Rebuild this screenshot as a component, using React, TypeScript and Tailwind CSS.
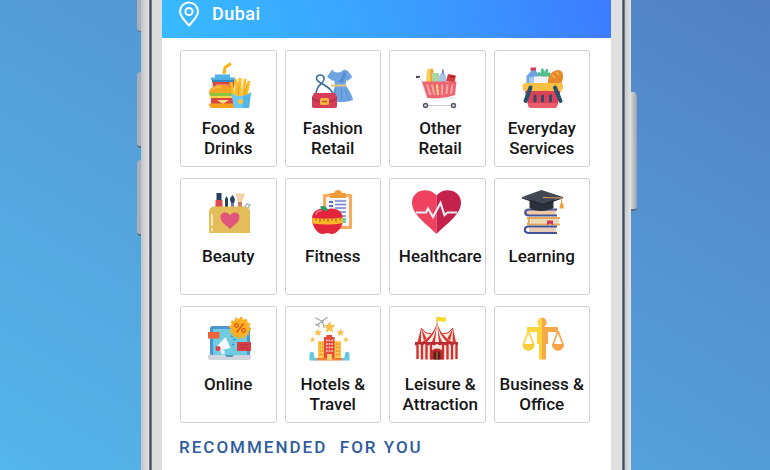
import React from 'react';

interface Category {
  lines: string[];
  icon: React.ReactNode;
}

interface IconProps {
  children: React.ReactNode;
}

const Icon: React.FC<IconProps> = ({ children }) => (
  <svg viewBox="0 0 50 50" width="50" height="50" aria-hidden="true">
    {children}
  </svg>
);

const STAR = 'M0 -6 1.8 -2 6 -1.7 2.8 1.2 3.7 5.4 0 3.2 -3.7 5.4 -2.8 1.2 -6 -1.7 -1.8 -2Z';

const FoodIcon = () => (
  <Icon>
    <path d="M21 14 22 7.500 28 3.500" fill="none" stroke="#f5b31f" strokeWidth="3" strokeLinejoin="round" />
    <path d="M8 20V17.500h4V14.500h15v3h5V20Z" fill="#4fb1e6" />
    <path d="M9 20h23l-1.500 10h-20Z" fill="#d9453f" />
    <path d="M9 20h23v2H9Z" fill="#3a86c4" />
    <path d="M13 24h15v2H13Z" fill="#f07a62" />
    <path d="M6 33c0-5 4-8 12-8s13 3 13 8Z" fill="#f5a524" />
    <path d="M9 30c2-3 5-3.500 9-3.500" fill="none" stroke="#fbc556" strokeWidth="1.500" />
    <path d="M6 33h26l-2 3H7Z" fill="#8cc63f" />
    <path d="M7 36h25v2H7Z" fill="#fbd34b" />
    <path d="M8 38h24v6H8Z" fill="#d9453f" />
    <path d="M14 40h12l-6 4Z" fill="#fbe08c" />
    <path d="M6 43.500h26V48H9c-2 0-3-2-3-4.500Z" fill="#f9a01b" />
    <path d="M31 36 28 22M34 36 32.500 19M37 36V18M40 36 42 19M43 36 46 21" stroke="#fbbf24" strokeWidth="3" />
    <path d="M35.500 35 35 22M41.500 35 44 24" stroke="#f08c1a" strokeWidth="1" />
    <path d="M28 33c6 4 13 4 20-1l-2 16H31Z" fill="#6cc8ee" />
    <path d="M40 36c3 0 6-2 8-4l-2 16h-6Z" fill="#55b6e4" />
    <circle cx="37.500" cy="41.500" r="2.500" fill="#f5c542" />
  </Icon>
);

const FashionIcon = () => (
  <Icon>
    <path d="M24 9.500c2 4 9 4 12 0l4 1.500 4.500 6-5 4-1-1-1 5c4 5 7 11 7.500 15-5 2.500-17 3-22 0 1-5 3-10 4-15l-1-5-1 1-6-4 4-6Z" fill="#6ea5e0" />
    <path d="M36 10c-1 6-3 9-6 12l5 .5 3-8Z" fill="#568ccc" />
    <path d="M23 24.500h14.500v2H23Z" fill="#e6c37a" />
    <path d="M28 28 26 41M33 28l1 13M37 29l4 11" stroke="#5790d0" strokeWidth="1" />
    <path d="M8 34C8 24 17 24 16 18c-.5-4-7-4-7.500 0-.5 6 15.500 7 16.500 17" fill="none" stroke="#3c6e9c" strokeWidth="1.600" />
    <path d="M6 33h21l2 4V46c0 1-.6 2-1.600 2H5.600C4.600 48 4 47 4 46V37Z" fill="#d63e57" />
    <path d="M4 37c7 5 18 5 25 0v3c-7 4-18 4-25 0Z" fill="#bd3450" />
    <rect x="12" y="38" width="9" height="7" rx="1.500" fill="#f7b343" />
    <path d="M14 41.500h5" stroke="#b7652a" strokeWidth="1.500" />
  </Icon>
);

const CartIcon = () => (
  <Icon>
    <path d="M14 22 15 9.500l2-1.500 2 2v12Z" fill="#f8cf58" />
    <path d="M18 22V10l2-2 1.500 2v12Z" fill="#f1a93a" />
    <path d="M20 13h7v9h-7Z" fill="#a9d6a5" />
    <path d="M27 16l4-5 3 5v6h-7Z" fill="#a8c6ea" />
    <path d="M31 9.500v5" stroke="#8494c8" strokeWidth="2" />
    <path d="m36 14 8 1.500-1.500 7L34 21Z" fill="#d83b3b" />
    <path d="m38 16 4 1" stroke="#8d2032" strokeWidth="1.500" />
    <path d="M4 17h4" stroke="#45475a" strokeWidth="2.200" />
    <path d="M7 17.500 10 22l5 16h28" fill="none" stroke="#dcdee6" strokeWidth="1.200" />
    <path d="M10 21.500h34.500L43 35c-9 3-18 3.500-27.500 3Z" fill="#ee6572" />
    <path d="M15 24.500 18.500 35M20 24.500 22.500 35M30 24.500V35M35.500 24.500 34.500 34M40.500 24.500 39 33.500" stroke="#f8a6a4" strokeWidth="2" />
    <path d="M25 24.500 26 35" stroke="#f6d58c" strokeWidth="2" />
    <path d="M14 45.500h28" stroke="#c8cbd6" strokeWidth="1.200" />
    <circle cx="13.500" cy="45.500" r="2" fill="#d9dbe3" stroke="#55566b" strokeWidth="1.400" />
    <circle cx="41.500" cy="45.500" r="2" fill="#d9dbe3" stroke="#55566b" strokeWidth="1.400" />
  </Icon>
);

const BasketIcon = () => (
  <Icon>
    <path d="M14 8h5v3l3 5v9H9.500v-9L14 11Z" fill="#6fa3de" />
    <path d="M13.500 7.500h5.500v3h-5.500Z" fill="#d63c55" />
    <path d="M12 17h5v7h-5Z" fill="#a7c9ee" />
    <path d="M25 17c-5-1-6-5-3-5l2 1c-1-5 2-7 3.500-1 2-5 5-4 3 1 3-2 4 1 1.500 4Z" fill="#4fbf8b" />
    <path d="M17 16.500h14V25H17Z" fill="#eef2f6" />
    <path d="M31 24c-1-8 4-14 11-14 5 1 5 8 2 14Z" fill="#e8892b" />
    <path d="m35 15 3 3m1-6 3 3" stroke="#f3b25a" strokeWidth="1.300" />
    <rect x="5.500" y="23" width="40.500" height="8" rx="3.500" fill="#fbbf45" />
    <path d="M8 31h35.500l-3 14c-.5 2-1.500 3-3.500 3H14.500c-2 0-3-1-3.500-3Z" fill="#d94359" />
    <path d="M10.500 43h30.500l-1 3c-.5 1.300-1.500 2-3 2H14.500c-1.500 0-2.500-.7-3-2Z" fill="#ea5d6b" />
    <path d="M13.500 27.500 8.500 41M38 27.500 43.500 41" stroke="#28516b" strokeWidth="4" strokeLinecap="round" />
    <path d="M18 36v5M25.500 36v5M33.500 36v5" stroke="#3a4668" strokeWidth="3" strokeLinecap="round" />
  </Icon>
);

const BeautyIcon = () => (
  <Icon>
    <path d="M13.500 5h5v7h-5Z" fill="#25405a" />
    <path d="M12.500 12h7v7h-7Z" fill="#dd4a50" />
    <path d="M22 11 23.500 8 25 11v9h-3Z" fill="#24445c" />
    <path d="M27 12c0-3 1-3 2.500-5C31 9 32 10 32 12L31 15h-3Z" fill="#2a4664" />
    <path d="M28 15h3v5h-3Z" fill="#6d79b8" />
    <path d="M32.500 5.500h9.500L39 14h-4Z" fill="#f4d2a8" />
    <path d="M35 14h4v6h-4Z" fill="#c77d63" />
    <path d="M41 20 44 16l3 1-3 4" fill="none" stroke="#86a7a8" strokeWidth="1.200" />
    <path d="M6 45V24c0-4 3-5.500 6-5.500h29c3 0 6 1.500 6 5.500v21Z" fill="#e2bd59" />
    <path d="M9 27v10M9 41v1.500" stroke="#f8e7b5" strokeWidth="2" strokeLinecap="round" />
    <path d="M27 41c-4-4-9.500-7-9.500-12 0-5 7-6.500 9.500-1.500 2.500-5 9.500-3.500 9.500 1.500 0 5-5.500 8-9.500 12Z" fill="#e0557b" />
  </Icon>
);

const FitnessIcon = () => (
  <Icon>
    <rect x="15" y="6" width="29" height="35" rx="1.500" fill="#f7ab5c" />
    <path d="M18 9h23v29H18Z" fill="#f5f5fa" />
    <path d="M22 5h4c1-4 7-4 8 0h4v5H22Z" fill="#f39c3a" />
    <path d="M21 14h4M21 18h4M21 22h4" stroke="#5a6cc4" strokeWidth="1.800" />
    <path d="M27 13h11M27 16.500h11M27 20h11M30 24h8M34 28h4" stroke="#7482cc" strokeWidth="1.400" />
    <path d="M34 30h4v5h-4Z" fill="#6fc7b7" />
    <path d="M19 21.500c6-3 16 0 16 9.500 0 8-6 15-11 15-2 0-3-1-4.500-1s-2.500 1-4.500 1C9 46 4 38 4 31c0-9.500 9-12.500 15-9.500Z" fill="#e3263c" />
    <path d="M8 26c1-2.500 3-3.500 5-3.500" fill="none" stroke="#f47b82" strokeWidth="1.500" strokeLinecap="round" />
    <path d="M12 18.500c4-1.500 7 0 8 4-4 1-7-.5-8-4Z" fill="#2d9e6b" />
    <path d="M4 30c10 1 20 1 31-.5v5.500c-10 2-20 2-30.500.5Z" fill="#fbb829" />
    <path d="M8 30.500v2M12 31v3M16 31v2M20 31v3M24 31v2M28 30.500v3M32 30v2" stroke="#9c5515" strokeWidth="1" />
  </Icon>
);

const HeartIcon = () => (
  <Icon>
    <path d="M24.500 46C15 36 0 27 0 14.500 0 2 17-2 24.500 7.500Z" fill="#ef4260" />
    <path d="M24.500 46C34 36 49 27 49 14.500 49 2 32-2 24.500 7.500Z" fill="#c4214d" />
    <path d="M4 24.500h10l2-4 5 8.500 7.500-14 4 12 3-2.500H45" fill="none" stroke="#e3edf5" strokeWidth="2.200" />
  </Icon>
);

const LearningIcon = () => (
  <Icon>
    <path d="M8 24.500h31" stroke="#efc9a2" strokeWidth="5" />
    <path d="M40 21.500H12c-5 0-5 6 0 6h28" fill="none" stroke="#45539a" strokeWidth="2.200" />
    <path d="M14 33h28" stroke="#ead8bb" strokeWidth="5" />
    <path d="M43 30H10.500M43 36.500H10.500M10 30c3 1 3 5 0 6.500" fill="none" stroke="#e2aa58" strokeWidth="2.200" />
    <path d="M30 32.500h6V37l-3-1.500-3 1.500Z" fill="#d6355b" />
    <path d="M12 42h27" stroke="#e8ccb6" strokeWidth="5" />
    <path d="M40 38.500H12c-5.500 0-5.500 6.500 0 6.500h28" fill="none" stroke="#45539a" strokeWidth="2.200" />
    <path d="M12.500 11h24v9c-7 4-18 4-24 0Z" fill="#2b303b" />
    <path d="M5 9 24.500 2 46 9 26 16Z" fill="#414754" />
    <path d="M5 9 26 16 46 9v1.300L26 17.500 5 10.500Z" fill="#242832" />
    <path d="M26 9.500 44.500 10v6" fill="none" stroke="#dca052" strokeWidth="1" />
    <path d="M43.500 15h2.500l1 5.500h-4.500Z" fill="#eea13c" />
  </Icon>
);

const OnlineIcon = () => (
  <Icon>
    <rect x="7" y="10" width="40" height="30" rx="2.500" fill="#4a97d2" />
    <path d="M10 13h34v26H10Z" fill="#6ecbe0" />
    <path d="M5 39h43v2.500c0 1.500-1 2.500-2.500 2.500h-38C6 44 5 43 5 41.500Z" fill="#cfd6de" />
    <path d="M22 39h9l-1.500 2h-6Z" fill="#4c9bc0" />
    <path d="M14 30 22.500 21 27.500 32 16.500 34.500Z" fill="#f5f8fb" />
    <path d="m17 34 4-.8 1 5h-3.500Z" fill="#e7eef5" />
    <circle cx="15" cy="32.500" r="2.500" fill="#dc3f43" />
    <path d="M28 20l2 1M30 24l3-1M29 28l2 1" stroke="#2e8bb0" strokeWidth="1.200" />
    <path d="M5 16h11.500v6.500H5Z" fill="#f0643a" />
    <path d="M34 26h14v9H34Z" fill="#d93f45" />
    <path d="M36.500 29h9M36.500 32h9" stroke="#a82b3b" strokeWidth="1" />
    <circle cx="37" cy="12" r="9.500" fill="#fbb023" />
    <circle cx="37" cy="12" r="10" fill="none" stroke="#fbb023" strokeWidth="2" strokeDasharray="2.600 2.600" />
    <path d="m33.500 16.500 7-9" stroke="#dd5a1d" strokeWidth="1.500" />
    <circle cx="33.500" cy="9.500" r="1.800" fill="none" stroke="#dd5a1d" strokeWidth="1.300" />
    <circle cx="40.500" cy="14.500" r="1.800" fill="none" stroke="#dd5a1d" strokeWidth="1.300" />
  </Icon>
);

const HotelIcon = () => (
  <Icon>
    <path d="M8.500 9.500 19 1.500M14 5 7.500 2M14.500 5 16 11.500M10 8.500 7 8M10.500 8.500 11 11" fill="none" stroke="#a5a5aa" strokeWidth="1.200" strokeLinecap="round" />
    <path d={STAR} transform="translate(21.500 11)" fill="#fbbf4d" />
    <path d={STAR} transform="translate(10 16.500) scale(.65)" fill="#fbbf4d" />
    <path d={STAR} transform="translate(32.500 16.500) scale(.65)" fill="#fbbf4d" />
    <path d={STAR} transform="translate(4.500 23.500) scale(.5)" fill="#fbc45c" />
    <path d={STAR} transform="translate(38 23.500) scale(.5)" fill="#fbc45c" />
    <path d="M10 25h7v19h-7ZM26 25h7v19h-7Z" fill="#fbc54e" />
    <path d="M16 21h2.500v-2H24v2h2.500v23H16Z" fill="#e8483b" />
    <path d="M18 24.500h7M18 28h7M18 31.500h7M18 35h7" stroke="#fff0dc" strokeWidth="1.600" strokeDasharray="1.500 1.200" />
    <path d="M11.500 28h4M11.500 31.500h4M11.500 35h4M11.500 38.500h4M28 28h4M28 31.500h4M28 35h4M28 38.500h4" stroke="#f38a2a" strokeWidth="1.400" strokeDasharray="1.500 1" />
    <path d="M7 42h28v2.500H7Z" fill="#f47b32" />
    <path d="M19 38h5v6h-5Z" fill="#f9cf6b" />
    <path d="M1.500 44.500v-7c1-2.500 4-2 4.500 0l.5 4 2.500 1v2ZM41.500 44.500v-7c-1-2.500-4-2-4.500 0l-.5 4-2.500 1v2Z" fill="#66c9df" />
  </Icon>
);

const TentIcon = () => (
  <Icon>
    <path d="M25 1v8" stroke="#c9a22c" strokeWidth="1" />
    <path d="M25 1.500c3-1.500 5 1.500 9-.5v4c-4 2-6-1-9 .5Z" fill="#f9d81f" />
    <path d="M9 12 3.500 27H19l2-9ZM41 12l5 15H31l-2-9Z" fill="#f8e9e2" />
    <path d="M9 12 5.500 27H9ZM9 12l3.500 15H17ZM41 12l3 15h-3.500ZM41 12l-3.500 15H33Z" fill="#d9342f" />
    <path d="M9 12 14 17 21 18M41 12l-5 5-7 1" fill="none" stroke="#d9342f" strokeWidth="1" />
    <path d="M25 6.500C23 15 17 22 8 26.500h34C33 22 27 15 25 6.500Z" fill="#f9efe9" />
    <path d="M25 6.500C23 15 17 22 9 26.500h5.500C20 21 24 15 25 6.500ZM25 6.500C24 15 22 22 19.500 26.500h3.500ZM25 6.500C26 15 28 22 30.500 26.500H27ZM25 6.500C27 15 33 22 41 26.500h-5.500C30 21 26 15 25 6.500Z" fill="#d9342f" />
    <path d="M4 28h41.500v15.500H4Z" fill="#f8e9e2" />
    <path d="M5.500 28v15M10 28v15.500M14.500 28v15.500M19 28v15.500M31 28v15.500M35.500 28v15.500M40 28v15.500M44.500 28v15" stroke="#d32f2f" strokeWidth="2.300" />
    <path d="M3 26h43v3l-3-1-3 1.500L37 28l-3 1.500L31 28l-3 1.500-3-1.500-3 1.500-3-1.500-3 1.500-3-1.500-3 1.500L7 28l-4 1.500Z" fill="#b92c30" />
    <path d="M19 43.500V37c0-6 12-6 12 0v6.500Z" fill="#c02a2c" />
    <path d="M21.500 43.500V38c0-4 7-4 7 0v5.500Z" fill="#55211f" />
    <path d="M25 35.500v8" stroke="#c47a3c" strokeWidth="1" />
  </Icon>
);

const ScalesIcon = () => (
  <Icon>
    <path d="M25 1.500a5 5 0 0 0-2.500 9V11H10v5h10v12h2v15.500h3.500Z" fill="#fcd43b" />
    <path d="M25 1.500a5 5 0 0 1 2.500 9V11H41v5H31v12h-2v15.500h-4Z" fill="#f7a94a" />
    <path d="M11.500 15 6.500 28.500M11.500 15l5 13.500" stroke="#fcd43b" strokeWidth="1.700" />
    <path d="M41 15l-5 13.500M41 15l5 13.500" stroke="#f7a94a" strokeWidth="1.700" />
    <path d="M5.500 28h12c0 9-12 9-12 0Z" fill="#f9ce35" />
    <path d="M35 28h12c0 9-12 9-12 0Z" fill="#f6a445" />
  </Icon>
);

const categories: Category[] = [
  { lines: ['Food &', 'Drinks'], icon: <FoodIcon /> },
  { lines: ['Fashion', 'Retail'], icon: <FashionIcon /> },
  { lines: ['Other', 'Retail'], icon: <CartIcon /> },
  { lines: ['Everyday', 'Services'], icon: <BasketIcon /> },
  { lines: ['Beauty'], icon: <BeautyIcon /> },
  { lines: ['Fitness'], icon: <FitnessIcon /> },
  { lines: ['Healthcare'], icon: <HeartIcon /> },
  { lines: ['Learning'], icon: <LearningIcon /> },
  { lines: ['Online'], icon: <OnlineIcon /> },
  { lines: ['Hotels &', 'Travel'], icon: <HotelIcon /> },
  { lines: ['Leisure &', 'Attraction'], icon: <TentIcon /> },
  { lines: ['Business &', 'Office'], icon: <ScalesIcon /> },
];

const CategoryCard: React.FC<{ category: Category }> = ({ category }) => (
  <button
    type="button"
    className="group flex min-w-0 flex-col items-center rounded-[3px] border border-[#d2d2d4] bg-white pt-[9px] pb-2"
  >
    {category.icon}
    <span className="mt-2 flex min-h-10 flex-col whitespace-nowrap text-center text-[17px] font-medium leading-5 text-[#161616] group-nth-[4n+3]:pl-1.5">
      {category.lines.map((line) => (
        <span key={line}>{line}</span>
      ))}
    </span>
  </button>
);

const App: React.FC = () => {
  return (
    <div className="flex min-h-screen justify-center overflow-hidden bg-linear-to-tr from-[#54b6ea] via-[#549cd8] to-[#5280c3] pl-1 font-['Roboto',sans-serif]">
      {/* Volume keys */}
      <div className="flex w-1 flex-col">
        <div className="h-8 rounded-bl-sm border-b border-[#5c6878] bg-[#a9b0bb]" />
        <div className="mt-10 h-[76px] rounded-l-sm border-b-2 border-[#5c6878] bg-[#a9b0bb]" />
        <div className="mt-3 h-[76px] rounded-l-sm border-b-2 border-[#5c6878] bg-[#a9b0bb]" />
      </div>

      {/* Phone body */}
      <div className="flex w-full max-w-[490px]">
        <div className="w-2 bg-linear-to-r from-[#c2c6ca] to-[#e2e2e1]" />
        <div className="w-[3px] bg-linear-to-r from-[#8d949f] via-[#404b5e] to-[#8d949f]" />
        <div className="w-2.5 bg-[#dadcdc]" />

        <main className="min-w-0 flex-1 bg-white">
          <header className="flex h-[38px] items-start gap-3 bg-linear-75 from-[#38baff] via-[#3ba1ff] to-[#3d7bff] pl-4 text-white">
            <svg viewBox="0 0 22 26" width="22" height="26" className="mt-px" fill="none" stroke="currentColor" strokeWidth="2" aria-hidden="true">
              <path d="M11 24.500C7.500 20.500 2 15.500 2 10.500a9 9 0 0 1 18 0c0 5-5.500 10-9 14Z" strokeLinejoin="round" />
              <circle cx="11" cy="10.500" r="3.600" />
            </svg>
            <span className="mt-0.5 text-lg font-medium leading-6 tracking-wide">Dubai</span>
          </header>

          {/* Category grid */}
          <section className="grid grid-cols-4 gap-x-2 gap-y-[11px] pt-3 pr-[21px] pl-[18px]">
            {categories.map((category) => (
              <CategoryCard key={category.lines.join(' ')} category={category} />
            ))}
          </section>

          <h2 className="mt-3 whitespace-pre pl-[17px] text-[17px] font-medium leading-6 tracking-[2px] text-[#2e5c9e]">
            {'RECOMMENDED  FOR YOU'}
          </h2>
        </main>

        <div className="w-[11px] bg-[#dfe1e0]" />
        <div className="w-[3px] bg-linear-to-r from-[#8d949f] via-[#404b5e] to-[#8d949f]" />
        <div className="w-1.5 bg-linear-to-r from-[#c9cccd] to-[#e2e3e3]" />
      </div>

      {/* Power key */}
      <div className="w-1.5 pt-[92px]">
        <div className="h-[119px] rounded-r-sm border-b-2 border-[#5c6878] bg-linear-to-r from-[#d3d6da] to-[#9aa1ab]" />
      </div>
    </div>
  );
};

export default App;
